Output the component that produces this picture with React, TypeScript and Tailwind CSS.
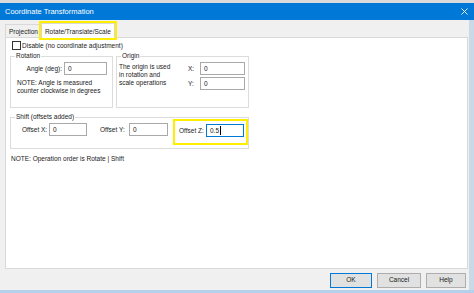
import React from "react";

function Field({ value, focused, w = "w-[43px]" }: { value: string; focused?: boolean; w?: string }) {
  return (
    <div
      className={`${w} h-[13px] bg-white border flex items-center pl-[3px] ${
        focused ? "border-[#0078d7]" : "border-[#a9a9a9]"
      }`}
    >
      <span>{value}</span>
      {focused && <span className="ml-[1px] h-[9px] w-px bg-black" />}
    </div>
  );
}

function Group({ title, className, children }: { title: string; className?: string; children: React.ReactNode }) {
  return (
    <fieldset className={`border border-[#dcdcdc] ${className ?? ""}`}>
      <legend className="ml-[4px] px-[1px] leading-[10px]">{title}</legend>
      {children}
    </fieldset>
  );
}

export default function App() {
  return (
    <div className="w-[474px] h-[293px] overflow-hidden whitespace-nowrap bg-[#f0f0f0] font-['Liberation_Sans',Arial,sans-serif] text-[6.5px] leading-[9px] text-[#1a1a1a] flex flex-col">
      <div className="h-[3px] bg-[#dadada]" />

      {/* Title bar */}
      <div className="h-[17px] bg-[#0078d7] text-white flex items-center justify-between pl-[5px] pr-[6px] text-[7.5px]">
        <span>Coordinate Transformation</span>
        <svg width="7" height="7" viewBox="0 0 8 8" stroke="white" strokeWidth="1">
          <path d="M0.5 0.5 L7.5 7.5 M7.5 0.5 L0.5 7.5" />
        </svg>
      </div>

      <div className="flex flex-1">
        <div className="w-[469px] flex flex-col">
          {/* Tabs */}
          <div className="flex items-end pl-[5px] pt-[2px] h-[17px]">
            <div className="h-[13px] px-[3px] flex items-center border border-b-0 border-r-0 border-[#d9d9d9] bg-[#f0f0f0]">
              Projection
            </div>
            <div className="h-[15px] px-[3px] flex items-center bg-white border border-b-0 border-[#d9d9d9] outline-2 outline-[#ffee00] -mb-px relative">
              Rotate/Translate/Scale
            </div>
          </div>

          {/* Tab panel */}
          <div className="ml-[5px] w-[463px] h-[232px] bg-white border border-[#d9d9d9] pt-[3px] px-[4px]">
            <div className="flex items-center gap-[1px] pl-[2px]">
              <div className="w-[9px] h-[9px] border border-[#333] bg-white" />
              <span>Disable (no coordinate adjustment)</span>
            </div>

            <div className="flex gap-[3px] mt-[1px]">
              <Group title="Rotation" className="w-[103px] h-[57px]">
                <div className="flex items-center mt-[1px]">
                  <span className="w-[53px] text-right pr-[2px]">Angle (deg):</span>
                  <Field value="0" />
                </div>
                <div className="pl-[6px] mt-[4px] leading-[8px]">
                  NOTE: Angle is measured
                  <br />
                  counter clockwise in degrees
                </div>
              </Group>
              <Group title="Origin" className="w-[133px] h-[57px]">
                <div className="flex">
                  <div className="pl-[2px] pt-[2px] w-[71px] leading-[8px]">
                    The origin is used
                    <br />
                    in rotation and
                    <br />
                    scale operations
                  </div>
                  <div className="flex flex-col gap-[2px] mt-[1px]">
                    <div className="flex items-center">
                      <span className="w-[12px]">X:</span>
                      <Field value="0" w="w-[45px]" />
                    </div>
                    <div className="flex items-center">
                      <span className="w-[12px]">Y:</span>
                      <Field value="0" w="w-[45px]" />
                    </div>
                  </div>
                </div>
              </Group>
            </div>

            <Group title="Shift (offsets added)" className="w-[239px] h-[37px] mt-[4px]">
              <div className="flex items-center mt-[1px] pl-[11px]">
                <span className="w-[27px]">Offset X:</span>
                <Field value="0" w="w-[38px]" />
                <span className="w-[29px] ml-[13px]">Offset Y:</span>
                <Field value="0" w="w-[39px]" />
                <div className="ml-[9px] flex items-center outline-2 outline-[#ffee00] outline-offset-[2px] pl-[2px] pt-px pb-[4px] -mb-[5px]">
                  <span className="w-[27px]">Offset Z:</span>
                  <Field value="0.5" w="w-[38px]" focused />
                </div>
              </div>
            </Group>

            <div className="mt-[5px] pl-[1px]">NOTE: Operation order is Rotate | Shift</div>
          </div>

          {/* Buttons */}
          <div className="flex justify-end gap-[5px] pr-[3px] pt-[4px]">
            <button className="w-[42px] h-[15px] bg-[#e1e1e1] border border-[#0078d7] text-[6.5px] leading-none">
              OK
            </button>
            <button className="w-[44px] h-[15px] bg-[#e1e1e1] border border-[#adadad] text-[6.5px] leading-none">
              Cancel
            </button>
            <button className="w-[40px] h-[15px] bg-[#e1e1e1] border border-[#adadad] text-[6.5px] leading-none">
              Help
            </button>
          </div>
        </div>
        <div className="w-[5px] bg-[#c9d9e8]" />
      </div>
      <div className="h-[3px] bg-[#b5d0ea]" />
    </div>
  );
}
